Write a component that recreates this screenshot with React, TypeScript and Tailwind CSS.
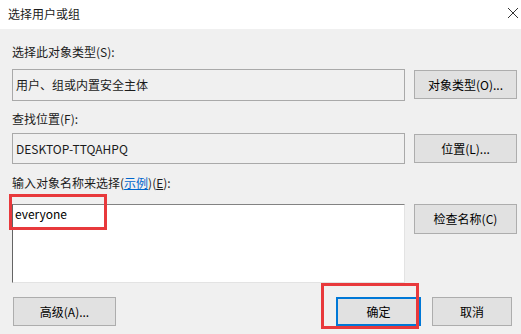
export default function App() {
  const btn =
    'flex items-center justify-center bg-[#e1e1e1] border border-[#adadad] text-[12px] text-black leading-none';
  const field =
    'border border-[#a9a9a9] bg-[#f0f0f0] flex items-center pl-[3px] text-[12px] text-[#1b1b1b]';

  return (
    <div
      className="relative w-[521px] h-[334px] overflow-hidden bg-[#f0f0f0] text-black"
      style={{ fontFamily: '"Microsoft YaHei", "Noto Sans CJK SC", "Noto Sans", sans-serif' }}
    >
      {/* title bar */}
      <div className="h-[29px] bg-white flex items-center justify-between pl-[8px] pr-[2px]">
        <span className="text-[12px] leading-none text-[#1b1b1b] -mt-[2px]">选择用户或组</span>
        <svg width="12" height="12" viewBox="0 0 12 12" className="-mt-[4px]">
          <path d="M1 1 L11 11 M11 1 L1 11" stroke="#333" strokeWidth="1" fill="none" />
        </svg>
      </div>

      <div className="pl-[12px] pr-[4px]">
        <div className="mt-[15px] h-[16px] flex items-center text-[12px] text-[#1b1b1b]">选择此对象类型(S):</div>
        <div className="mt-[9px] flex items-start gap-[9px]">
          <div className={`${field} w-[393px] h-[32px]`}>用户、组或内置安全主体</div>
          <button className={`${btn} w-[103px] h-[29px] mt-[1px]`}>对象类型(O)...</button>
        </div>

        <div className="mt-[10px] h-[16px] flex items-center text-[12px] text-[#1b1b1b]">查找位置(F):</div>
        <div className="mt-[6px] flex items-start gap-[9px]">
          <div className={`${field} w-[393px] h-[31px]`}>DESKTOP-TTQAHPQ</div>
          <button className={`${btn} w-[103px] h-[29px] mt-[1px]`}>位置(L)...</button>
        </div>

        <div className="mt-[11px] h-[16px] flex items-center text-[12px] text-[#1b1b1b]">
          输入对象名称来选择(<span className="text-[#0066cc] underline">示例</span>)(<span className="underline">E</span>):
        </div>
        <div className="mt-[13px] flex items-start gap-[9px]">
          <div className="w-[393px] h-[79px] bg-white border border-t-[#828282] border-l-[#646464] border-r-[#e3e3e3] border-b-[#e3e3e3] pl-[2px] pt-[1px] text-[12px] text-black leading-[16px]">
            everyone
          </div>
          <button className={`${btn} w-[103px] h-[30px]`}>检查名称(C)</button>
        </div>

        <div className="mt-[14px] flex items-start">
          <button className={`${btn} w-[103px] h-[29px] ml-[1px]`}>高级(A)...</button>
          <button className="ml-auto flex items-center justify-center w-[85px] h-[29px] bg-[#e1e1e1] border-2 border-[#0078d7] text-[12px] text-black leading-none">
            确定
          </button>
          <button className={`${btn} w-[80px] h-[29px] ml-[11px] mr-[5px]`}>取消</button>
        </div>
      </div>

      {/* red annotation boxes */}
      <div className="absolute left-[9px] top-[194px] w-[98px] h-[36px] border-[3px] border-[#e8393c]" />
      <div className="absolute left-[321px] top-[283px] w-[98px] h-[46px] border-[3px] border-[#e8393c]" />
    </div>
  );
}
